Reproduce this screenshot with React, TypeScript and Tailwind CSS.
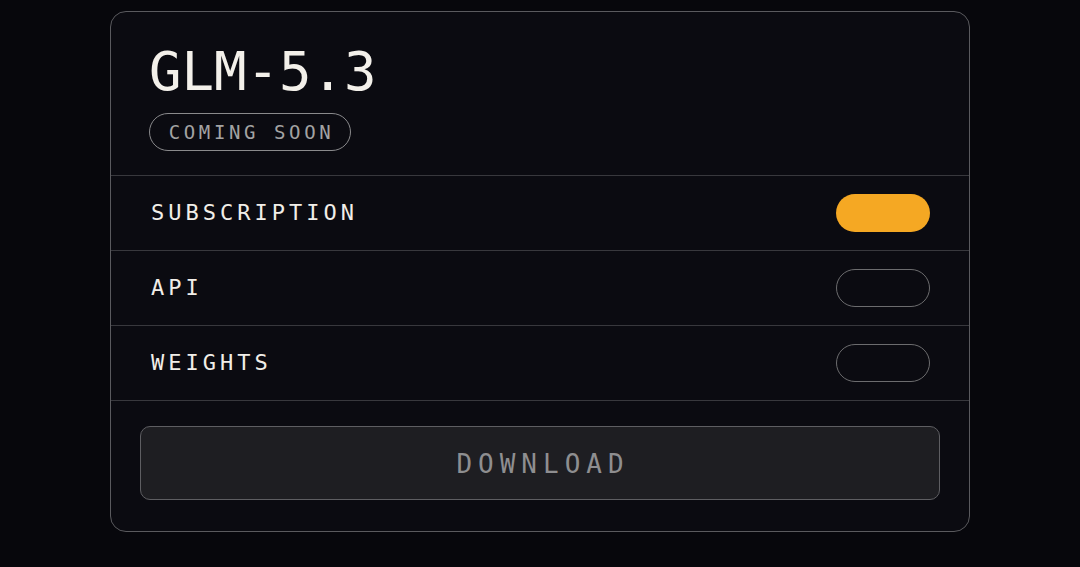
import React from "react";

const mono = { fontFamily: '"DejaVu Sans Mono", "Liberation Mono", monospace' };

function Row({ label, on }: { label: string; on?: boolean }) {
  return (
    <div className="flex h-[75px] items-center justify-between border-t border-[#38383d] pl-[40px] pr-[39px]">
      <span className="text-[22px] leading-none tracking-[4px] text-[#f1eee8]">{label}</span>
      {on ? (
        <div className="h-[38px] w-[94px] rounded-full bg-[#f5a823]" />
      ) : (
        <div className="h-[38px] w-[94px] rounded-full border-[1.5px] border-[#6c6c6e]" />
      )}
    </div>
  );
}

export default function App() {
  return (
    <div className="min-h-[567px] w-full bg-[#07070c] pt-[11px]" style={mono}>
      <div className="mx-auto w-[860px] overflow-hidden rounded-[16px] border border-[#5a5a5e] bg-[#0b0b11]">
        <div className="px-[38px] pb-[24px] pt-[34px]">
          <div className="text-[54px] leading-[52px] text-[#f3f0ea]">GLM-5.3</div>
          <div className="mt-[15px] flex h-[38px] w-[202px] items-center justify-center rounded-full border-[1.5px] border-[#8a8a8c]">
            <span className="pl-[3px] text-[19px] leading-none tracking-[3.6px] text-[#a3a3a3]">COMING SOON</span>
          </div>
        </div>
        <Row label="SUBSCRIPTION" on />
        <Row label="API" />
        <Row label="WEIGHTS" />
        <div className="border-t border-[#38383d] px-[29px] pb-[31px] pt-[25px]">
          <button className="flex h-[74px] w-full items-center justify-center rounded-[10px] border border-[#5e5e62] bg-[#1e1e22]">
            <span className="mt-[2px] pl-[6px] text-[26px] leading-none tracking-[6px] text-[#8e8e90]">DOWNLOAD</span>
          </button>
        </div>
      </div>
    </div>
  );
}
